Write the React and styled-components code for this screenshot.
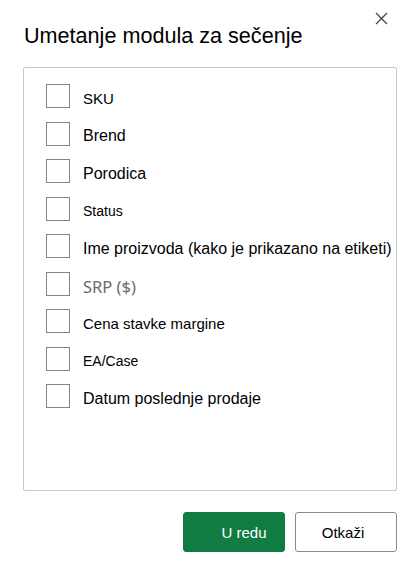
import styled, { createGlobalStyle } from "styled-components";

const GlobalStyle = createGlobalStyle`
  html, body {
    margin: 0;
    padding: 0;
    background: #fff;
  }
  body {
    font-family: "Liberation Sans", Arial, sans-serif;
    color: #000;
  }
`;

const Dialog = styled.div`
  width: 418px;
  height: 577px;
  box-sizing: border-box;
  padding: 12px 21px 0 23px;
  background: #fff;
`;

const Header = styled.div`
  display: flex;
  justify-content: space-between;
  align-items: flex-start;
`;

const Title = styled.h1`
  margin: 10px 0 0 1px;
  font-size: 21.6px;
  line-height: 28px;
  font-weight: 400;
  color: #000;
`;

const CloseButton = styled.button`
  display: flex;
  width: 13px;
  height: 13px;
  margin-right: 9px;
  padding: 0;
  border: 0;
  background: none;
  color: #444;
  cursor: pointer;
`;

const ListBox = styled.div`
  display: flex;
  flex-direction: column;
  gap: 13.5px;
  height: 424px;
  margin-top: 17px;
  padding: 16px 0 0 22px;
  box-sizing: border-box;
  border: 1px solid #c8c8c8;
  border-radius: 2px;
`;

const Row = styled.label`
  display: flex;
  align-items: center;
  gap: 13px;
  height: 24px;
  cursor: pointer;
`;

const Box = styled.span`
  flex: none;
  width: 24px;
  height: 24px;
  box-sizing: border-box;
  border: 1px solid #858585;
  background: #fff;
`;

const Label = styled.span`
  margin-top: 5px;
  font-family: ${(p) =>
    p.$alt ? '"Noto Sans", sans-serif' : '"Liberation Sans", Arial, sans-serif'};
  font-size: ${(p) => p.$size}px;
  color: ${(p) => (p.$muted ? "#6b6b6b" : "#000")};
  white-space: nowrap;
`;

const Footer = styled.div`
  display: flex;
  justify-content: flex-end;
  gap: 10px;
  margin-top: 21px;
`;

const Button = styled.button`
  width: 102px;
  height: 40px;
  box-sizing: border-box;
  border-radius: 3px;
  font-family: "Liberation Sans", Arial, sans-serif;
  font-size: 15px;
  cursor: pointer;
  border: 1px solid ${(p) => (p.$primary ? "#107c41" : "#8a8a8a")};
  background: ${(p) => (p.$primary ? "#107c41" : "#fff")};
  color: ${(p) => (p.$primary ? "#fff" : "#000")};
  padding: ${(p) => (p.$primary ? "0 0 0 20px" : "0 6px 0 0")};
`;

const fields = [
  { name: "SKU", size: 15 },
  { name: "Brend", size: 16 },
  { name: "Porodica", size: 16 },
  { name: "Status", size: 14 },
  { name: "Ime proizvoda (kako je prikazano na etiketi)", size: 16 },
  { name: "SRP ($)", size: 16.5, alt: true, muted: true },
  { name: "Cena stavke margine", size: 15 },
  { name: "EA/Case", size: 14 },
  { name: "Datum poslednje prodaje", size: 16 },
];

const CloseIcon = () => (
  <svg width="13" height="13" viewBox="0 0 13 13">
    <path d="M1 1L12 12M12 1L1 12" stroke="currentColor" strokeWidth="1.3" />
  </svg>
);

const App = () => (
  <>
    <GlobalStyle />
    <Dialog>
      <Header>
        <Title>Umetanje modula za sečenje</Title>
        <CloseButton aria-label="Zatvori">
          <CloseIcon />
        </CloseButton>
      </Header>
      <ListBox>
        {fields.map((f) => (
          <Row key={f.name}>
            <Box />
            <Label $size={f.size} $alt={f.alt} $muted={f.muted}>
              {f.name}
            </Label>
          </Row>
        ))}
      </ListBox>
      <Footer>
        <Button $primary>U redu</Button>
        <Button>Otkaži</Button>
      </Footer>
    </Dialog>
  </>
);

export default App;
